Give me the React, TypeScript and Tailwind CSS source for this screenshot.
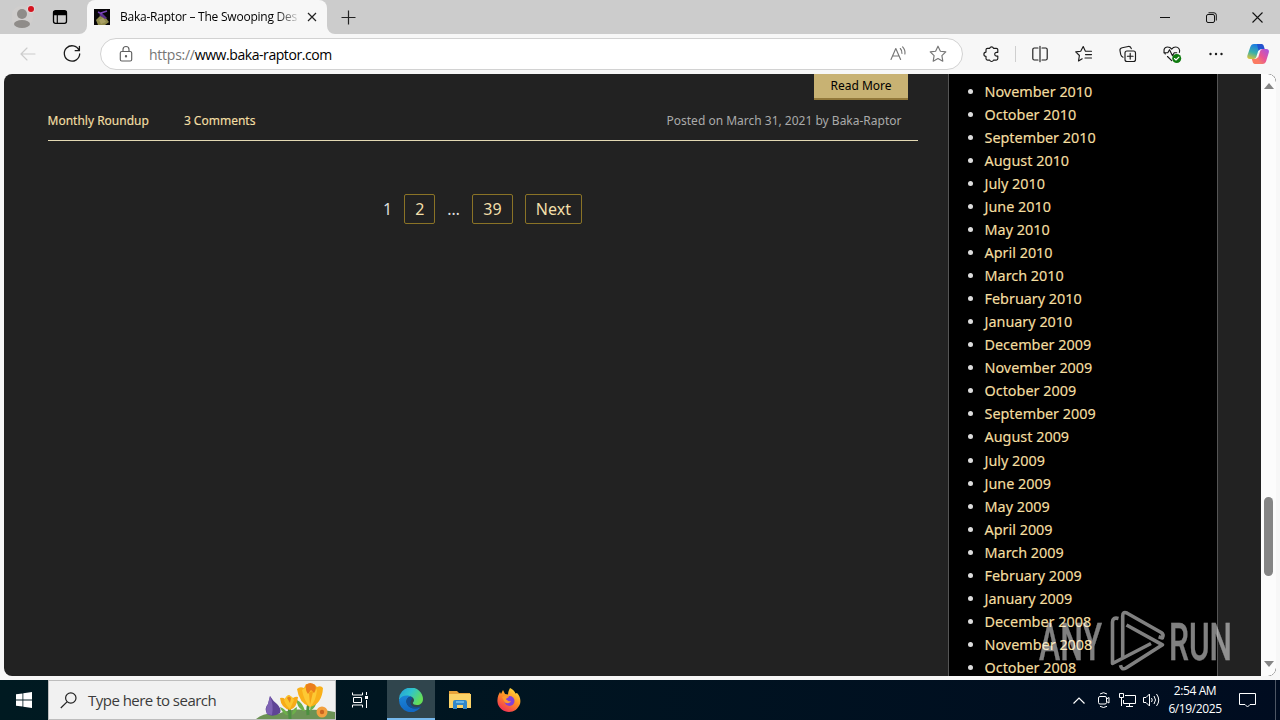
import type { ReactNode } from "react";

const archives = [
  "December 2010",
  "November 2010",
  "October 2010",
  "September 2010",
  "August 2010",
  "July 2010",
  "June 2010",
  "May 2010",
  "April 2010",
  "March 2010",
  "February 2010",
  "January 2010",
  "December 2009",
  "November 2009",
  "October 2009",
  "September 2009",
  "August 2009",
  "July 2009",
  "June 2009",
  "May 2009",
  "April 2009",
  "March 2009",
  "February 2009",
  "January 2009",
  "December 2008",
  "November 2008",
  "October 2008",
];

interface IconProps {
  size?: number;
  className?: string;
  children: ReactNode;
}

// Outline icon on a 20x20 grid
function Icon({ size = 20, className = "", children }: IconProps) {
  return (
    <svg
      width={size}
      height={size}
      viewBox="0 0 20 20"
      fill="none"
      stroke="currentColor"
      strokeWidth="1.15"
      strokeLinecap="round"
      strokeLinejoin="round"
      className={`shrink-0 ${className}`}
    >
      {children}
    </svg>
  );
}

function TabBar() {
  return (
    <div className="flex h-[34px] items-end bg-[#cccccc] text-black">
      <div className="flex h-full w-[87px] items-center pl-3">
        <svg width="24" height="26" viewBox="0 0 24 26" className="shrink-0">
          <circle cx="10" cy="13" r="11" fill="#d0cecd" />
          <circle cx="10" cy="10" r="5" fill="#8f8c89" />
          <ellipse cx="10" cy="20" rx="8" ry="4" fill="#8f8c89" />
          <circle cx="19" cy="5" r="4" fill="#e4d3d4" />
          <circle cx="19" cy="5" r="3" fill="#d4141f" />
        </svg>
        <Icon className="ml-[14px]">
          <rect x="3.5" y="3.7" width="13" height="12.6" rx="2" strokeWidth="1.3" />
          <path d="M4 4.6h12v3H4z" fill="currentColor" />
          <path d="M7.3 8v8" />
        </Icon>
      </div>
      <div className="relative flex h-full w-[240px] items-center rounded-t-lg bg-[#f7f7f7] pl-[7px]">
        <svg width="8" height="8" className="absolute bottom-0 -left-2">
          <path d="M8 0v8H0a8 8 0 0 0 8-8z" fill="#f7f7f7" />
        </svg>
        <svg width="8" height="8" className="absolute -right-2 bottom-0">
          <path d="M0 0v8h8a8 8 0 0 1-8-8z" fill="#f7f7f7" />
        </svg>
        <svg width="16" height="16" viewBox="0 0 16 16" className="shrink-0">
          <rect width="16" height="16" fill="#080608" />
          <path d="M2 11l4-4 5 1 4 5-4 3H4z" fill="#8f8a4a" />
          <path d="M5 6l3-2 5 5-2 1z" fill="#5a2f8c" />
          <path d="M7 4l6-2M4 3l4 2" stroke="#7a45b8" strokeWidth="1.4" />
          <path d="M5 11l4-2 3 4-5 2z" fill="#aaa064" />
        </svg>
        <div className="ml-[10px] w-[178px] bg-gradient-to-r from-black from-85% to-[#d8d8d8] bg-clip-text text-[12px] whitespace-nowrap text-transparent">
          <span className="tracking-[-0.23px]">Baka-Raptor – The Swooping Des</span>
        </div>
        <svg width="10" height="10" viewBox="0 0 10 10" className="ml-[9px] shrink-0" stroke="#222" strokeWidth="1.2">
          <path d="M1 1l8 8M9 1l-8 8" />
        </svg>
      </div>
      <div className="flex h-full items-center pl-[14px]">
        <svg width="15" height="15" stroke="#222" strokeWidth="1.2">
          <path d="M7.5 .5v14M.5 7.5h14" />
        </svg>
      </div>
      <div className="ml-auto flex h-full items-center">
        <div className="flex w-[46px] justify-center">
          <svg width="10" height="10" stroke="#111">
            <path d="M0 5.5h10" />
          </svg>
        </div>
        <div className="flex w-[46px] justify-center">
          <svg width="11" height="11" fill="none" stroke="#111">
            <rect x=".5" y="2.5" width="8" height="8" rx="1.5" />
            <path d="M2.5 .8h5.5a2.3 2.3 0 0 1 2.3 2.3v5.4" />
          </svg>
        </div>
        <div className="flex w-[46px] justify-center">
          <svg width="11" height="11" stroke="#111" strokeWidth="1.1">
            <path d="M.5 .5l10 10M10.5 .5l-10 10" />
          </svg>
        </div>
      </div>
    </div>
  );
}

function Copilot() {
  return (
    <svg width="24" height="24" viewBox="0 0 24 24" className="shrink-0">
      <defs>
        <linearGradient id="copilotTop" x1=".3" y1="0" x2="0" y2="1">
          <stop offset="0" stopColor="#1d7fe0" />
          <stop offset=".5" stopColor="#3bb0a8" />
          <stop offset="1" stopColor="#f0c62c" />
        </linearGradient>
        <linearGradient id="copilotBottom" x1="1" y1="0" x2="0" y2="1">
          <stop offset="0" stopColor="#a155e8" />
          <stop offset=".5" stopColor="#ea5494" />
          <stop offset="1" stopColor="#fb9b4c" />
        </linearGradient>
      </defs>
      <path d="M8 2h8L12.500 8 10.300 15q-.6 2-2.600 2H4c-2.300 0-3.200-1.500-2.600-3.600L4.300 5C5 3 6 2 8 2z" fill="url(#copilotTop)" />
      <path d="M16.500 22H8.500L12 16l2.200-7q.6-2 2.600-2h3.400c2.300 0 3.200 1.500 2.600 3.600L20.200 19c-.7 2-1.700 3-3.700 3z" fill="url(#copilotBottom)" />
      <path d="M11 2h4.500c1.500 0 2 1 2.500 2.800L18.700 7h-2.200c-2 0-3 .5-4 2z" fill="#2353cf" />
      <path d="M13.500 22H9c-1.500 0-2-1-2.500-2.800L5.800 17H8c2 0 3-.5 4-2z" fill="#fb7a62" />
    </svg>
  );
}

function Toolbar() {
  return (
    <div className="flex h-10 items-center bg-[#f7f7f7] text-[#1b1b1b]">
      <Icon className="ml-[18px] text-[#cccccc]">
        <path d="M17 10H3M9 4l-6 6 6 6" />
      </Icon>
      <Icon className="ml-6" size={20}>
        <path d="M17 6.200A7.700 7.700 0 1 0 17.700 10M17.400 2.500v4.200h-4.200" strokeWidth="1.3" />
      </Icon>
      <div className="ml-[18px] flex h-8 w-[863px] items-center rounded-full border border-[#d2d2d2] bg-white">
        <Icon className="ml-[15px] text-[#5f5f5f]">
          <rect x="4.300" y="7.500" width="11.400" height="9.500" rx="1.500" />
          <path d="M7 7.300V5.500a3 3 0 0 1 6 0v1.800" />
          <circle cx="10" cy="12.200" r=".6" fill="currentColor" />
        </Icon>
        <div className="ml-[13px] text-[14px] tracking-[-0.43px] whitespace-nowrap text-black">
          <span className="tracking-[-0.25px] text-[#767676]">https://</span>www.baka-raptor.com
        </div>
        <Icon className="ml-auto text-[#767676]">
          <path d="M3 15.500L7.800 4.500l4.800 11M4.700 12h6.200" />
          <path d="M12.300 4.500q2 2 1.600 4.800M14.600 2.800q2.900 3 2.300 7.200" />
        </Icon>
        <Icon className="mr-[14px] ml-5 text-[#767676]">
          <path d="M10 2.200l2.400 5 5.400.7-3.900 3.800.9 5.500-4.800-2.600-4.800 2.600.9-5.500-3.900-3.800 5.400-.7z" />
        </Icon>
      </div>
      <Icon className="ml-[18px]">
        <path d="M6.500 4.300h2.200a2 2 0 0 1 3.800 0h2.800a1.500 1.500 0 0 1 1.500 1.500v2.500h-1.200a1.900 1.900 0 0 0 0 3.800h1.200v2.500a1.500 1.500 0 0 1-1.500 1.500h-2.800a2 2 0 0 1-3.800 0H6.500A1.500 1.500 0 0 1 5 14.600v-2.300a2.100 2.100 0 0 1 0-4.200V5.800a1.500 1.500 0 0 1 1.500-1.500z" />
      </Icon>
      <div className="ml-[14px] h-4 w-px bg-[#cfcfcf]" />
      <Icon className="ml-[14px]">
        <path d="M8 4H4.300A1.500 1.500 0 0 0 2.800 5.500v9A1.500 1.500 0 0 0 4.300 16H8M12 4h3.700a1.500 1.500 0 0 1 1.500 1.500v9a1.500 1.500 0 0 1-1.500 1.500H12M10 2.300v15.400" />
      </Icon>
      <Icon className="ml-6">
        <path d="M8.200 14.800l-3.700 2.200.9-5.500L1.700 7.900l5-.7L9.200 2.500l2.200 4.700h6.100M11.500 10.600h6M11 14h6.500" />
      </Icon>
      <Icon className="ml-6">
        <rect x="7" y="7" width="10.500" height="10.500" rx="2" />
        <path d="M12.200 9.400v5.700M9.400 12.200h5.700M5 13.200C3.500 12.600 3 11.700 2.700 10.400L2 6.600C1.700 5 2.700 4 4.200 3.700l6-1.200c1.600-.3 2.700.5 3.100 2.200" />
      </Icon>
      <Icon className="ml-6">
        <path d="M3.300 10C.8 7.400 1.800 3 5.500 3c2 0 3.300.8 4.200 2.100C10.600 3.800 12 3 13.700 3c3 0 4.600 2.800 3.700 5.400M5.500 12.500l4.200 4.200M1.800 8.700h4l1.700-3 3 6 1.700-3h2.500" />
        <circle cx="14.700" cy="14.500" r="4.500" fill="#0f7b0f" stroke="none" />
        <path d="M12.500 14.500l1.500 1.500 2.900-2.900" stroke="#fff" />
      </Icon>
      <Icon className="ml-6">
        <g fill="currentColor" stroke="none">
          <circle cx="4.500" cy="10" r="1.200" />
          <circle cx="10" cy="10" r="1.200" />
          <circle cx="15.500" cy="10" r="1.200" />
        </g>
      </Icon>
      <div className="ml-5">
        <Copilot />
      </div>
    </div>
  );
}

function PageLink({ className, children }: { className: string; children: ReactNode }) {
  return (
    <a className={`flex h-[30px] items-center justify-center rounded-[2px] border border-[#8a7326] text-[#f2dfaa] ${className}`}>
      {children}
    </a>
  );
}

function Post() {
  return (
    <main className="w-[944px] pl-11 text-[12px]">
      <div className="flex w-[870px] justify-end pr-[10px]">
        <a className="flex h-[26px] w-[94px] items-center justify-center border-b-2 border-[#92783a] bg-[#c8b273] text-black">
          Read More
        </a>
      </div>
      <div className="flex h-[41px] w-[870px] items-center border-b border-[#e3d9b3] pt-[2px] pr-[16.500px] text-[#f2dfa4]">
        <a className="-ml-[0.5px] [-webkit-text-stroke:0.15px]">Monthly Roundup</a>
        <a className="ml-[35px] [-webkit-text-stroke:0.15px]">3 Comments</a>
        <span className="ml-auto text-[#aaaaaa]">Posted on March 31, 2021 by Baka-Raptor</span>
      </div>
      <nav className="mt-[53px] flex w-[870px] items-center justify-center pr-px text-[16px] leading-none text-[#dddddd]">
        <span>1</span>
        <PageLink className="ml-3 w-[31px]">2</PageLink>
        <span className="ml-3">…</span>
        <PageLink className="ml-3 w-[41px]">39</PageLink>
        <PageLink className="ml-3 w-[57px]">Next</PageLink>
      </nav>
    </main>
  );
}

function Sidebar() {
  return (
    <aside className="w-[270px] overflow-hidden border-x border-[#555555] bg-black">
      <ul className="-mt-[17.300px] list-disc pl-[35.500px] text-[14.4px] leading-[23.04px] text-[#f4dfa0] [-webkit-text-stroke:0.15px] marker:text-[#dddddd]">
        {archives.map((month) => (
          <li key={month}>{month}</li>
        ))}
      </ul>
    </aside>
  );
}

function Scrollbar() {
  return (
    <div className="flex w-[15px] flex-col items-center rounded-r-lg bg-[#fcfcfc]">
      <svg width="10" height="6" className="mt-[9px]">
        <path d="M5 0l5 6H0z" fill="#858585" />
      </svg>
      <div className="mt-[408px] h-[79px] w-[9px] rounded-full bg-[#858585]" />
      <svg width="10" height="6" className="mt-auto mb-[9px]">
        <path d="M0 0h10L5 6z" fill="#858585" />
      </svg>
    </div>
  );
}

function Watermark() {
  return (
    <div className="absolute top-[608px] left-[1036px] opacity-50">
      <svg width="200" height="66" viewBox="0 0 200 66" fill="#ffffff">
        <g fontFamily="Roboto, sans-serif" fontSize="52" fontWeight="500" stroke="#ffffff" strokeWidth=".3">
          <text x="3" y="51.5" textLength="63" lengthAdjust="spacingAndGlyphs">ANY</text>
          <text x="133" y="51.5" textLength="63" lengthAdjust="spacingAndGlyphs">RUN</text>
        </g>
        <g fill="none" stroke="#ffffff" strokeWidth="3.6" strokeLinejoin="round">
          <path d="M82.500 10.500q-6-1.500-6 3.500v41.500l38.500-20" />
          <path d="M86.700 49V8q0-5 4.500-2.800l34 19.300q3 2 1.200 5.500l-3.800-1.200" />
          <path d="M90.500 17l36 19.800-36.500 23.200q-4.500 2.500-5.500-2.800" />
        </g>
      </svg>
    </div>
  );
}

function Flowers() {
  return (
    <svg width="79" height="38" viewBox="0 0 79 38" className="ml-auto shrink-0">
      <path d="M0 38q9-7 22-5 13-6 28-4 16-1 29 2v7z" fill="#6c9355" />
      <path d="M34 38q0-7-1-13M52 34q-1-8 2-15" stroke="#4c9040" strokeWidth="3" fill="none" />
      <path d="M47 30q-7-5-6-11 6 3 8 11zM54 30q0-9 7-11-1 8-7 11zM30 34q-5-4-6-8 6 2 8 8zM36 34q0-6 5-8 0 6-5 8z" fill="#6cb04a" />
      <path d="M14 15q3 5 7 8 5 5 3 9-7 5-13 1-3-6 1-10z" fill="#5f4496" />
      <path d="M14 15q4 9 2 19l-5-1q-2-6 1-10z" fill="#7e62b4" />
      <path d="M24 17q3-1 5 1 2-4 4-4l4 3q3-2 5-1-1 11-8 13-9-2-10-12z" fill="#f7ab18" />
      <path d="M28 19q2-4 5-5 4 2 5 5l-4 9q-4-3-6-9z" fill="#fcc62c" />
      <path d="M31 17q2-3 4 0l-1 5z" fill="#e8861a" />
      <path d="M41 8q3-3 7-1l2-4h8l3 3q4-2 6 1-1 16-13 19Q43 22 41 8z" fill="#f9b01a" />
      <path d="M46 9q3-3 8-3 5 0 7 3-1 11-7 17-6-6-8-17z" fill="#fdc934" />
      <path d="M50 4q4-4 9 0 2 4-1 8l-3-3-3 4q-3-4-2-9z" fill="#ea7d1d" />
      <path d="M53 12q2-3 4-1l-3 13z" fill="#f5a118" />
      <circle cx="66" cy="31" r="5.500" fill="#f2a03f" />
      <circle cx="66" cy="31" r="2.200" fill="#c96520" />
    </svg>
  );
}

function Taskbar() {
  return (
    <div className="flex h-10 bg-gradient-to-r from-[#001a21] to-[#000c20] text-white">
      <div className="flex w-12 items-center justify-center">
        <svg width="16" height="16" viewBox="0 0 16 16" fill="#ffffff">
          <path d="M0 2.300L6.500 1.400v6.200H0zM7.300 1.300L16 0v7.600H7.300zM0 8.400h6.500v6.200L0 13.700zM7.300 8.400H16V16l-8.700-1.300z" />
        </svg>
      </div>
      <div className="flex w-[288px] items-center border border-[#bdbdbd] bg-[#f1f1f1]">
        <svg width="17" height="17" viewBox="0 0 17 17" fill="none" stroke="#222" strokeWidth="1.200" className="ml-[11px]">
          <circle cx="10.800" cy="6" r="5.200" />
          <path d="M7 9.800L.8 16" />
        </svg>
        <span className="ml-[11px] text-[15px] tracking-[-0.52px] whitespace-nowrap text-[#3b3b3b]">Type here to search</span>
        <Flowers />
      </div>
      <div className="flex w-[51px] items-center pl-4">
        <svg width="18" height="16" fill="none" stroke="#ffffff">
          <path d="M.5 .5v2.500h10V.5M.5 15.500V13h10v2.500M1.500 5.500h8v5h-8zM14.500 0v3M14.500 8v8" />
          <path d="M13 4h3v3h-3z" fill="#fff" stroke="none" />
        </svg>
      </div>
      <div className="flex w-12 items-center justify-center border-b-2 border-[#76b9ed] bg-[#30454d] pt-[2px]">
        <svg width="24" height="24" viewBox="0 0 24 24">
          <defs>
            <linearGradient id="edgeTop" x1="0" y1="0" x2="1" y2=".5">
              <stop offset="0" stopColor="#249bd8" />
              <stop offset=".5" stopColor="#2fc3cd" />
              <stop offset="1" stopColor="#65de57" />
            </linearGradient>
            <linearGradient id="edgeBody" x1="0" y1="0" x2=".3" y2="1">
              <stop offset="0" stopColor="#1b86d9" />
              <stop offset="1" stopColor="#1168c4" />
            </linearGradient>
          </defs>
          <path d="M0 12a12 12 0 0 1 24-1c0 4-3 6-6 6-3 0-4.500-1.200-4-2.500 2-2 1-5.500-3-6C6 8 2 9 0 12z" fill="url(#edgeTop)" />
          <path d="M0 12C2 7 9 6.500 12 8.500c-4 .5-5.500 4-4 7.500 2 4 7 6 13.500 3.500A12 12 0 0 1 0 12z" fill="url(#edgeBody)" />
          <path d="M12 8.500c-4 .5-5.500 4-4 7.500 2 4 7 6 13.500 3.500.7-.7 0-1.500-1-1-5 2-10-1-9-5 .3-1.500 1-1.500 1.500-2.500s0-2-1-2.500z" fill="#124f94" />
        </svg>
      </div>
      <div className="flex w-[49px] items-center justify-center">
        <svg width="22" height="20" viewBox="0 0 22 20">
          <path d="M0 1h8l2 2h11v4H0z" fill="#e8a33a" />
          <path d="M0 4h22v14H0z" fill="#fbd267" />
          <path d="M4 19v-7q0-2 2-2h10q2 0 2 2v7h-4v-4H8v4z" fill="#3187c9" />
          <path d="M7 11h8v2H7z" fill="#64b5e8" />
        </svg>
      </div>
      <div className="flex w-[49px] items-center justify-center">
        <svg width="24" height="24" viewBox="0 0 24 24">
          <defs>
            <linearGradient id="foxTail" x1=".8" y1="0" x2=".2" y2="1">
              <stop offset="0" stopColor="#ffe23e" />
              <stop offset=".45" stopColor="#ff9224" />
              <stop offset="1" stopColor="#f0265a" />
            </linearGradient>
          </defs>
          <path d="M13 0c4 2 5 4 5.500 5.500L20 5c3 3 4 7 3 11-2 5-6 8-11 8S1 20 .5 14C0 9 2 6 3 4l1 2 2-4 2 4 3 .5C11 4 12 2 13 0z" fill="url(#foxTail)" />
          <circle cx="12.500" cy="13" r="5" fill="#8240d8" />
          <path d="M5 9c3-2 5 0 7-1 0 2-3 2-3 3.500 2 1 3 2.500 5 1.500-1 3-6 3-7 0z" fill="#ff9a2a" />
        </svg>
      </div>
      <div className="ml-auto flex items-center">
        <svg width="12" height="7" fill="none" stroke="#fff" strokeWidth="1.200">
          <path d="M.5 6.500L6 1l5.500 5.500" />
        </svg>
        <svg width="12" height="16" fill="none" stroke="#fff" className="ml-[13px]">
          <rect x=".5" y="4.500" width="8" height="7.500" rx="1.500" />
          <path d="M8.500 7l2.500-1.500v5.500L8.500 9.500M2 2q3.500-2.600 7 0M2 14.300q3.500 2.400 7 0" />
        </svg>
        <svg width="17" height="14" fill="none" stroke="#fff" className="ml-[9px]">
          <path d="M6 2.500h10.500v8H4.500V7M10.500 10.500v3M7 13.500h7M.5 .5h4v4h-4zM2.500 4.500V13" />
        </svg>
        <svg width="17" height="14" fill="none" stroke="#fff" className="ml-[7px]">
          <path d="M.5 4.500H3l3.500-3.500v12L3 9.500H.5zM8.500 5q1.500 2 0 4M11 3q3 4 0 8M13.500 1q4.500 6 0 12" />
        </svg>
        <div className="ml-px w-[68px] text-center text-[12px] leading-[18px] tracking-[-0.4px] whitespace-nowrap">
          <div>2:54 AM</div>
          <div>6/19/2025</div>
        </div>
        <svg width="17" height="17" fill="none" stroke="#fff" className="ml-[10px]">
          <path d="M.5 1.500h16v11H11L8.500 15 6 12.500H.5z" />
        </svg>
        <div className="ml-[19px] h-10 w-px bg-[#4d5664]" />
        <div className="w-1" />
      </div>
    </div>
  );
}

export default function App() {
  return (
    <div className="relative flex h-[720px] w-[1280px] flex-col overflow-hidden bg-[#f7f7f7] font-['Open_Sans',sans-serif]">
      <TabBar />
      <Toolbar />
      <div className="mx-1 mb-1 flex h-[602px] overflow-hidden rounded-lg bg-[#222222] font-['Noto_Sans',sans-serif]">
        <Post />
        <Sidebar />
        <div className="flex-1" />
        <Scrollbar />
      </div>
      <Taskbar />
      <Watermark />
    </div>
  );
}
